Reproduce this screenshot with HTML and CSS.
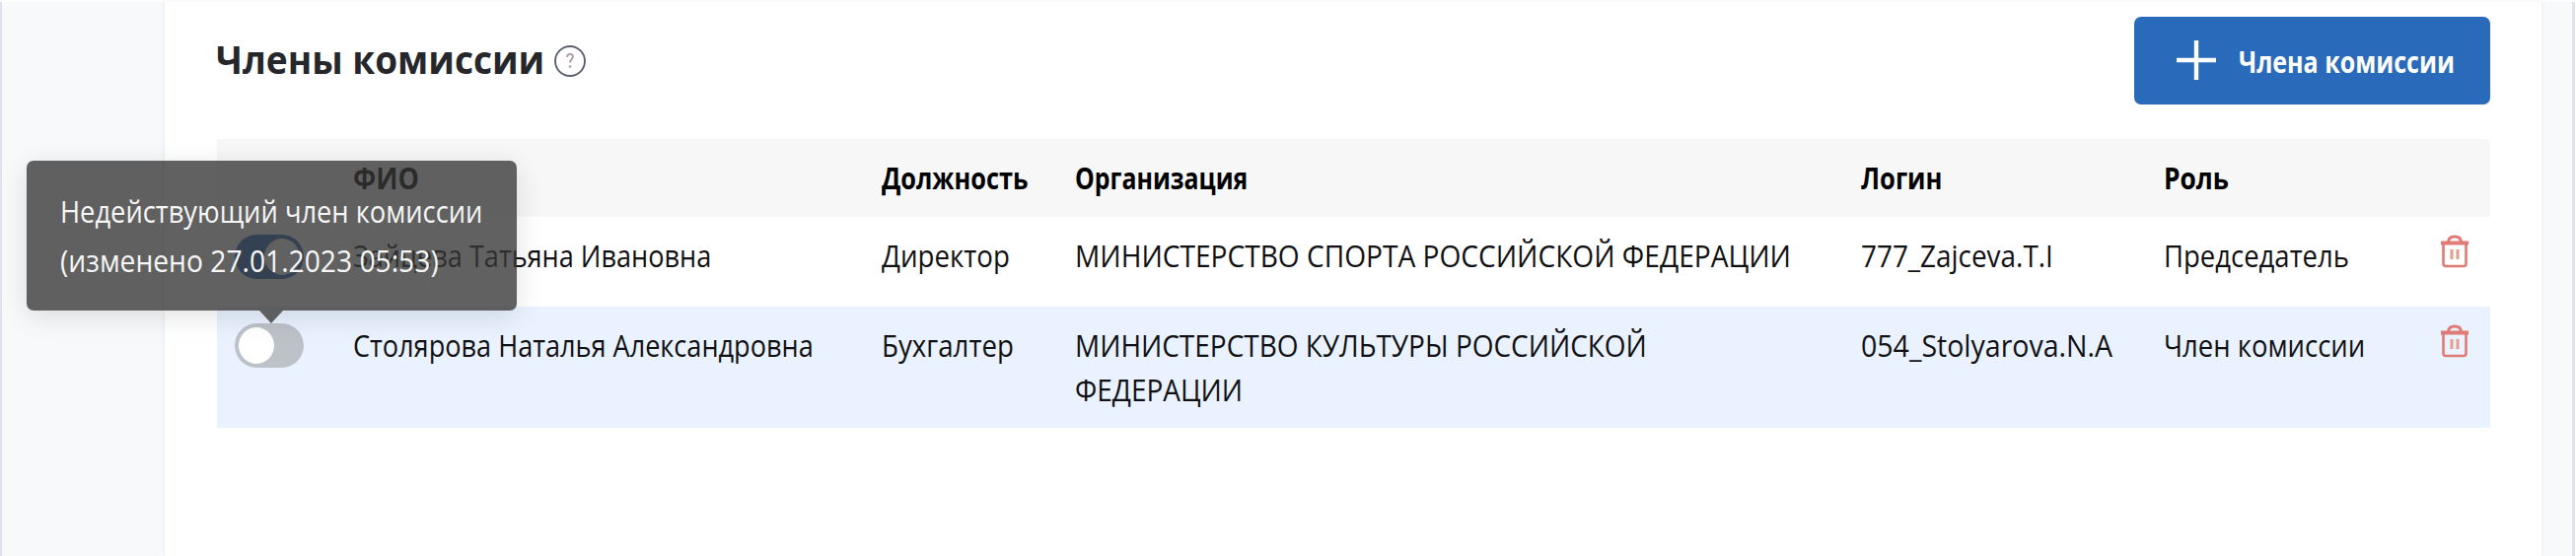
FILE: index.html
```html
<!DOCTYPE html>
<html lang="ru">
<head>
<meta charset="utf-8">
<title>Члены комиссии</title>
<link rel="stylesheet" href="styles.css">
</head>
<body>
<div class="page">
  <main class="panel">
    <header class="panel-head">
      <h1 class="title"><span class="fit title-text">Члены комиссии</span>
        <svg class="help" viewBox="0 0 34 34" width="34" height="34"><circle cx="17" cy="17" r="15" fill="none" stroke="#5c6070" stroke-width="1.900"/><path d="M14 12.800c.3-1.900 1.300-2.900 3-2.900 1.800 0 2.900 1 2.900 2.700 0 2.500-2.900 2.700-2.900 6" fill="none" stroke="#a79daa" stroke-width="1.900"/><circle cx="17" cy="22.500" r="1.300" fill="#a79daa"/></svg>
      </h1>
      <button class="add" type="button">
        <svg class="plus" viewBox="0 0 40 40" width="40" height="40"><path d="M20 0v40M0 20h40" stroke="#fff" stroke-width="4.400"/></svg>
        <span class="fit add-label">Члена комиссии</span>
      </button>
    </header>
    <section class="table">
      <div class="row row-head">
        <span></span>
        <span class="fit h-name">ФИО</span>
        <span class="fit h-pos">Должность</span>
        <span class="fit h-org">Организация</span>
        <span class="fit h-login">Логин</span>
        <span class="fit h-role">Роль</span>
        <span></span>
      </div>
      <div class="row row-first">
        <span class="switch switch-on"><i class="knob"></i></span>
        <span class="fit name">Зайцева Татьяна Ивановна</span>
        <span class="fit pos">Директор</span>
        <span class="fit org">МИНИСТЕРСТВО СПОРТА РОССИЙСКОЙ ФЕДЕРАЦИИ</span>
        <span class="fit login">777_Zajceva.T.I</span>
        <span class="fit role">Председатель</span>
        <svg class="trash" viewBox="0 0 30 34" width="30" height="34"><g fill="none" stroke="#df7a74"><path d="M1 8.500h28" stroke-width="4"/><path d="M8.500 7c.5-3.600 2.500-4.900 6.500-4.900s6 1.300 6.500 4.900" stroke-width="3"/><path d="M3.500 9v20.500q0 2.500 2.500 2.500h18q2.500 0 2.500-2.500V9" stroke-width="2.600"/><path d="M12 15v10M18 15v10" stroke="#e0a08c" stroke-width="3"/></g></svg>
      </div>
      <div class="row row-active">
        <span class="switch"><i class="knob"></i>
          <span class="tooltip"><span class="fit tip-a">Недействующий член комиссии</span><span class="fit tip-b">(изменено 27.01.2023 05:53)</span></span>
        </span>
        <span class="fit name">Столярова Наталья Александровна</span>
        <span class="fit pos">Бухгалтер</span>
        <span class="fit org org-long">МИНИСТЕРСТВО КУЛЬТУРЫ РОССИЙСКОЙ<br>ФЕДЕРАЦИИ</span>
        <span class="fit login login-wide">054_Stolyarova.N.A</span>
        <span class="fit role">Член комиссии</span>
        <svg class="trash" viewBox="0 0 30 34" width="30" height="34"><g fill="none" stroke="#df7a74"><path d="M1 8.500h28" stroke-width="4"/><path d="M8.500 7c.5-3.600 2.500-4.900 6.500-4.900s6 1.300 6.500 4.900" stroke-width="3"/><path d="M3.500 9v20.500q0 2.500 2.500 2.500h18q2.500 0 2.500-2.500V9" stroke-width="2.600"/><path d="M12 15v10M18 15v10" stroke="#e0a08c" stroke-width="3"/></g></svg>
      </div>
    </section>
  </main>
</div>
</body>
</html>
```

FILE: styles.css
```css
* { box-sizing: border-box; }

body {
  margin: 0;
  background: #fff;
  color: #111114;
  font-family: "Open Sans", "Noto Sans", sans-serif;
  font-size: 31px;
  line-height: 45px;
}

/* Narrowed letterforms: --k is the horizontal scale of a text */
.fit {
  display: block;
  justify-self: start;
  transform: scaleX(var(--k));
  transform-origin: 0 50%;
  white-space: nowrap;
}

.page {
  height: 562px;
  margin: 2px 1px 0 0;
  padding: 0 31px 0 165px;
  background: #f8f9fb;
  border: solid #dfe4ec;
  border-width: 0 3px 0 2px;
}

.panel {
  height: 562px;
  padding: 15px 52px 0 53px;
  background: #fff;
  box-shadow: 0 0 5px rgba(0, 0, 0, .07);
}

.panel-head {
  display: flex;
  justify-content: space-between;
  align-items: flex-start;
  height: 124px;
}

.title {
  display: flex;
  align-items: center;
  margin: 16px 0 0 -1px;
  color: #26272b;
  font-size: 40px;
  font-weight: 700;
  line-height: 54px;
}

.title-text { --k: .925; width: 342px; }

.help { margin-top: 3px; }

.add {
  display: flex;
  align-items: center;
  gap: 22px;
  width: 361px;
  height: 89px;
  padding: 0 0 0 43px;
  border: 0;
  border-radius: 7px;
  background: #2a6aba;
  color: #fff;
  font: inherit;
  font-weight: 700;
}

.plus { flex: none; margin-top: -2px; }

.add-label { --k: .806; margin: 2px 0 0 1px; }

.row {
  display: grid;
  grid-template-columns: 138px 536px 196px 797px 307px 280px auto;
  align-items: start;
  height: 91px;
  padding-top: 17px;
}

.row-head {
  height: 79px;
  background: #f7f7f8;
  color: #000;
  font-weight: 700;
}

.row-active {
  height: 123px;
  background: #eaf2ff;
}

.h-name { --k: .87; }
.h-pos { --k: .817; }
.h-org { --k: .802; }
.h-login { --k: .825; }
.h-role { --k: .85; }

.name { --k: .874; }
.pos { --k: .893; }
.org { --k: .907; }
.org-long { --k: .902; }
.login { --k: .9; }
.login-wide { --k: .92; }
.role { --k: .886; }

.switch {
  position: relative;
  display: flex;
  width: 70px;
  height: 45px;
  margin: 0 0 0 18px;
  padding: 4px;
  border-radius: 23px;
  background: #bdc2c9;
}

.switch-on {
  justify-content: flex-end;
  margin-top: 1px;
  background: #2a6aba;
}

.knob {
  width: 36px;
  height: 37px;
  border-radius: 50%;
  background: #fff;
}

.trash { margin-top: 1px; }

/* Tooltip hangs above the second toggle and covers the rows behind it */
.tooltip {
  position: absolute;
  left: -211px;
  bottom: 58px;
  z-index: 2;
  width: 497px;
  height: 152px;
  padding: 26px 0 0 34px;
  border-radius: 7px;
  background: rgba(54, 54, 54, .79);
  box-shadow: 0 6px 28px rgba(0, 0, 0, .12);
  color: #f6f6f6;
  line-height: 50px;
}

.tooltip::after {
  content: "";
  position: absolute;
  left: 236px;
  top: 152px;
  border: solid transparent;
  border-width: 13px 12.500px 0;
  border-top-color: #5e5f60;
}

.tip-a { --k: .88; width: 482px; }
.tip-b { --k: .91; width: 422px; }
```
